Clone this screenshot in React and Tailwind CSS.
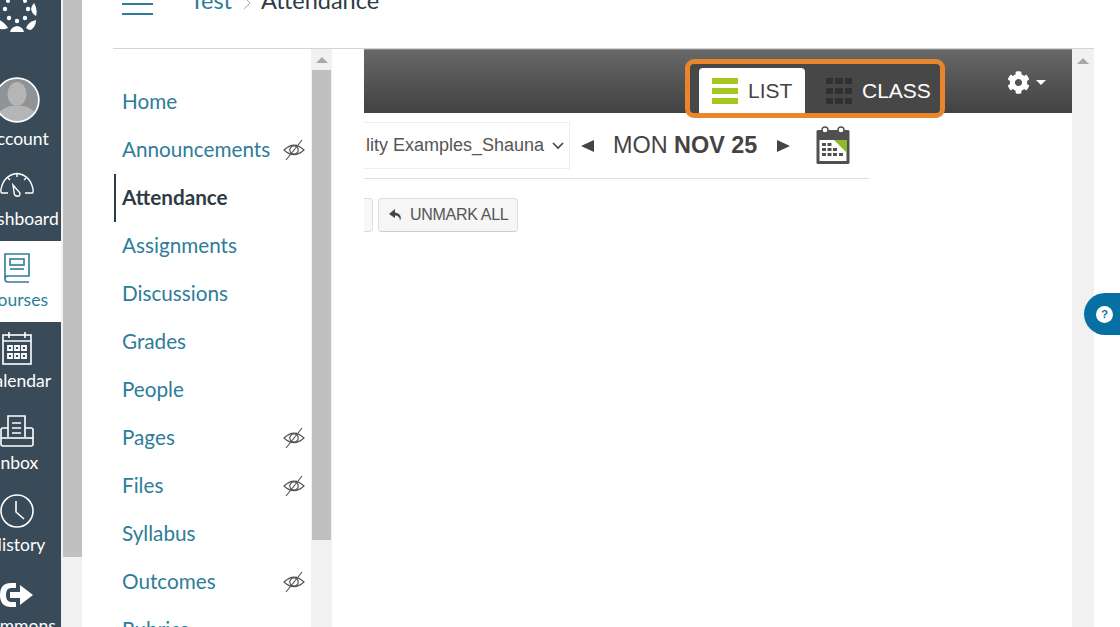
import { FaCog } from 'react-icons/fa';

const lato = "font-['Lato',sans-serif]";
const arial = "font-['Liberation_Sans',Arial,sans-serif]";

function CanvasLogo() {
  return (
    <svg viewBox="-3 0 40 34" className="w-[40px] h-[34px]" fill="#fff">
      <path d="M10 32 Q11 27 17 26 Q23 27 24 32Z" />
      <path d="M-3 19 Q4 21 8 28 Q1 31 -3 27Z" />
      <path d="M26 28 Q28 22 36 20 Q36 26 31 30 Q28 30 26 28Z" />
      <path d="M34 3 Q38 9 36 16 Q32 14 31 9 Q32 5 34 3Z" />
      <circle cx="17" cy="21" r="2.2" />
      <circle cx="25" cy="18" r="2.2" />
      <circle cx="9" cy="18" r="2.2" />
      <circle cx="5" cy="9" r="2.2" />
      <circle cx="28" cy="9" r="2.2" />
      <circle cx="25" cy="1" r="2" />
      <circle cx="8" cy="1" r="2" />
    </svg>
  );
}

// Icons for the global nav, drawn to match the Canvas set
function AccountIcon() {
  return (
    <svg viewBox="0 0 46 46" className="w-[46px] h-[46px] shrink-0">
      <defs>
        <clipPath id="avatar"><circle cx="23" cy="23" r="21" /></clipPath>
      </defs>
      <circle cx="23" cy="23" r="21" fill="#8f9396" />
      <g clipPath="url(#avatar)">
        <ellipse cx="23" cy="17" rx="9.5" ry="12" fill="#b5b5b5" />
        <path d="M0 46 Q2 33 16 29 L30 29 Q44 33 46 46Z" fill="#b5b5b5" />
      </g>
      <circle cx="23" cy="23" r="21.8" fill="none" stroke="#fff" strokeWidth="1.8" />
    </svg>
  );
}

function DashboardIcon() {
  return (
    <svg viewBox="0 0 34 27" className="w-[34px] h-[27px] shrink-0" fill="none" stroke="#fff" strokeWidth="1.4">
      <path d="M8 21 H2 Q0.5 21 1 17 Q4 3 17 1.5 Q30 3 33 17 Q33.5 21 32 21 H25" />
      <path d="M13 13 L20 21 Q20 25 17 24 Q14 24 14 20Z" />
      <path d="M17 2 v3 M8 6 l2 2 M26 6 l-2 2" />
    </svg>
  );
}

function CoursesIcon() {
  return (
    <svg viewBox="0 0 30 32" className="w-[30px] h-[32px] shrink-0" fill="none" stroke="#2d7d9a" strokeWidth="1.6">
      <path d="M3 26 V2 H27 V24 H6 Q3 24 3 27 Q3 30 6 30 H27" />
      <rect x="8" y="7" width="14" height="6" />
      <path d="M8 17 H22" />
    </svg>
  );
}

function CalendarIcon() {
  return (
    <svg viewBox="0 0 32 34" className="w-[32px] h-[34px] shrink-0" fill="none" stroke="#fff" strokeWidth="1.6">
      <rect x="2" y="4" width="28" height="29" />
      <path d="M2 10 H30 M8 1 v6 M24 1 v6" />
      <path strokeWidth="1.8" d="M7 15 h4 v4 h-4z M14 15 h4 v4 h-4z M21 15 h4 v4 h-4z M7 23 h4 v4 h-4z M14 23 h4 v4 h-4z M21 23 h4 v4 h-4z" />
    </svg>
  );
}

function InboxIcon() {
  return (
    <svg viewBox="0 0 34 32" className="w-[34px] h-[32px] shrink-0" fill="none" stroke="#fff" strokeWidth="1.6">
      <path d="M8 22 V1 H25 V22" />
      <path d="M12 8 H21 M12 13 H21 M12 18 H21" />
      <path d="M8 13 H3 Q1 13 1 15 V29 Q1 31 3 31 H31 Q33 31 33 29 V15 Q33 13 31 13 H25" />
      <path d="M1 23 H33" />
    </svg>
  );
}

function HistoryIcon() {
  return (
    <svg viewBox="0 0 36 36" className="w-[36px] h-[36px] shrink-0" fill="none" stroke="#fff" strokeWidth="1.6">
      <circle cx="18" cy="18" r="16" />
      <path d="M17 8 V19 L25 26" />
    </svg>
  );
}

function CommonsIcon() {
  return (
    <svg viewBox="0 0 36 26" className="w-[36px] h-[26px] shrink-0" fill="#fff">
      <path d="M17 1 H12 Q1 1 1 13 Q1 25 12 25 H17 V20 H12 Q7 20 7 13 Q7 6 12 6 H17Z" />
      <path d="M11 10 H21 V3 L34 13 L21 23 V16 H11Z" />
    </svg>
  );
}

function EyeOff() {
  return (
    <svg viewBox="0 0 22 22" className="w-[22px] h-[22px]" fill="none" stroke="#555" strokeWidth="1.2">
      <path d="M1 11 Q11 1 21 11 Q11 20 1 11Z" />
      <circle cx="11" cy="11" r="4.2" />
      <path d="M3 21 L19 1" />
    </svg>
  );
}

function CalendarPicker() {
  return (
    <svg viewBox="0 0 34 38" className="w-[34px] h-[38px]">
      <rect x="0.5" y="4" width="33" height="34" rx="1.5" fill="#505050" />
      <rect x="3.5" y="14" width="27" height="21" fill="#fff" />
      <circle cx="9" cy="4" r="3" fill="#fff" stroke="#505050" strokeWidth="1.4" />
      <circle cx="25" cy="4" r="3" fill="#fff" stroke="#505050" strokeWidth="1.4" />
      <g fill="#505050">
        <rect x="6" y="17" width="4" height="3" /><rect x="11.5" y="17" width="4" height="3" />
        <rect x="6" y="22" width="4" height="3" /><rect x="11.5" y="22" width="4" height="3" /><rect x="17" y="22" width="4" height="3" />
        <rect x="6" y="27" width="4" height="3" /><rect x="11.5" y="27" width="4" height="3" /><rect x="17" y="27" width="4" height="3" /><rect x="23" y="27" width="4" height="3" />
      </g>
      <path d="M18 14 H31 V27Z" fill="#8cb82b" />
    </svg>
  );
}

function ListIcon() {
  return (
    <span className="flex flex-col gap-[4px] w-[26px]">
      <span className="h-[6px] bg-[#a5c81e]" />
      <span className="h-[6px] bg-[#a5c81e]" />
      <span className="h-[6px] bg-[#a5c81e]" />
    </span>
  );
}

function ClassIcon() {
  return (
    <span className="grid grid-cols-3 gap-x-[2px] gap-y-[4px] w-[26px]">
      {[...Array(9)].map((_, i) => (
        <span key={i} className="h-[6px] bg-[#303030]" />
      ))}
    </span>
  );
}

const navItems = [
  { label: 'Account', icon: <AccountIcon />, h: 'h-[71px]' },
  { label: 'Dashboard', icon: <DashboardIcon />, h: 'h-[80px]', gap: 'gap-[10px]' },
  { label: 'Courses', icon: <CoursesIcon />, h: 'h-[81px]', active: true },
  { label: 'Calendar', icon: <CalendarIcon />, h: 'h-[81px]' },
  { label: 'Inbox', icon: <InboxIcon />, h: 'h-[82px]' },
  { label: 'History', icon: <HistoryIcon />, h: 'h-[82px]' },
  { label: 'Commons', icon: <CommonsIcon />, h: 'h-[81px]', gap: 'gap-[8px]' },
];

const menuItems = [
  { label: 'Home' },
  { label: 'Announcements', hidden: true },
  { label: 'Attendance', active: true },
  { label: 'Assignments' },
  { label: 'Discussions' },
  { label: 'Grades' },
  { label: 'People' },
  { label: 'Pages', hidden: true },
  { label: 'Files', hidden: true },
  { label: 'Syllabus' },
  { label: 'Outcomes', hidden: true },
  { label: 'Rubrics' },
];

function GlobalNav() {
  return (
    <div className="w-[61px] h-full bg-[#394b58] overflow-hidden shrink-0">
      <div className={`w-[88px] -ml-[27px] ${lato}`}>
        <div className="h-[90px] flex justify-center">
          <CanvasLogo />
        </div>
        {navItems.map(item => (
          <div
            key={item.label}
            className={`${item.h} flex flex-col items-center justify-end pb-[12px] ${item.gap || 'gap-[6px]'} ${item.active ? 'bg-white text-[#2d7d9a]' : 'text-white'}`}
          >
            {item.icon}
            <div className="text-[17.5px] leading-[20px]">{item.label}</div>
          </div>
        ))}
      </div>
    </div>
  );
}

function CourseMenu() {
  return (
    <div className={`w-[198px] pt-[29px] shrink-0 ${lato}`}>
      {menuItems.map(item => (
        <div key={item.label} className="h-[48px] flex items-center justify-between pl-[1px] pr-[6px]">
          <div className={`h-[48px] flex items-center pl-[6px] border-l-2 ${item.active ? 'border-[#2d3b45] font-bold text-[#2d3b45]' : 'border-transparent text-[#2d7d9a]'} text-[20.7px]`}>
            {item.label}
          </div>
          {item.hidden && <EyeOff />}
        </div>
      ))}
    </div>
  );
}

function ScrollUp() {
  return <div className="w-0 h-0 mx-auto border-x-[6px] border-x-transparent border-b-[6px] border-b-[#a8a8a8]" />;
}

function Toolbar() {
  return (
    <div className="h-[65px] bg-gradient-to-b from-[#686868] to-[#424242] border-t-2 border-[#8a8a8a] flex justify-end items-start pr-[26px]">
      <div className="mt-[9px] -mb-[10px] w-[260px] h-[59px] rounded-[9px] border-[5px] border-[#e8862e] bg-[#474747] flex items-end pl-[9px] relative z-10">
        <div className="w-[106px] h-[45px] rounded-t-[4px] bg-white flex items-center gap-[10px] pl-[13px] text-[#444]">
          <ListIcon />
          <span className={`${arial} text-[21px]`}>LIST</span>
        </div>
        <div className="h-[45px] flex items-center gap-[10px] pl-[21px] text-white">
          <ClassIcon />
          <span className={`${arial} text-[21px]`}>CLASS</span>
        </div>
      </div>
      <div className="ml-[62px] mt-[21px] flex items-center gap-[6px]">
        <FaCog size={23} color="#fff" />
        <span className="w-0 h-0 border-x-[5px] border-x-transparent border-t-[5px] border-t-white" />
      </div>
    </div>
  );
}

function DateBar() {
  return (
    <div className="w-[505px] h-[66px] border-b border-[#ddd] flex items-start">
      <div className="w-[206px] h-[47px] mt-[9px] border border-l-0 border-[#eee] bg-white flex items-center justify-end pr-[5px] gap-[8px] overflow-hidden shrink-0">
        <span className={`${arial} text-[18px] text-[#555] whitespace-nowrap`}>lity Examples_Shauna</span>
        <svg viewBox="0 0 12 8" className="w-[12px] h-[8px] shrink-0" fill="none" stroke="#444" strokeWidth="1.6"><path d="M1 1 L6 6 L11 1" /></svg>
      </div>
      <div className="h-[47px] mt-[9px] flex items-center text-[#444]">
        <span className="ml-[11px] w-0 h-0 border-y-[6px] border-y-transparent border-r-[13px] border-r-[#444]" />
        <span className={`${arial} ml-[19px] text-[23.4px] whitespace-nowrap`}>MON <b>NOV 25</b></span>
        <span className="ml-[20px] w-0 h-0 border-y-[6px] border-y-transparent border-l-[13px] border-l-[#444]" />
        <span className="ml-[26px] -mt-[2px]"><CalendarPicker /></span>
      </div>
    </div>
  );
}

function Actions() {
  return (
    <div className="flex gap-[5px] mt-[19px]">
      <div className="w-[9px] h-[34px] rounded-r-[4px] border border-l-0 border-[#ddd] bg-[#f7f7f7]" />
      <div className={`${arial} w-[140px] h-[34px] rounded-[4px] border border-[#ddd] border-b-[#ccc] bg-[#f6f6f6] flex items-center pl-[10px] gap-[7px] text-[16px] tracking-[-0.3px] text-[#555] whitespace-nowrap`}>
        <svg viewBox="0 0 14 14" className="w-[14px] h-[14px] shrink-0" fill="#444"><path d="M6 1 L0 6 L6 10 V7.5 Q11 7.5 11 13 Q14 6 6 4.5Z" /></svg>
        UNMARK ALL
      </div>
    </div>
  );
}

export default function App() {
  return (
    <div className="relative w-[1120px] h-[627px] overflow-hidden bg-white flex">
      <GlobalNav />
      {/* page scrollbar */}
      <div className="w-[21px] h-full bg-[#f1f1f1] shrink-0">
        <div className="h-[557px] bg-[#c0c0c0] ml-[2px]" />
      </div>

      <div className="flex-1 min-w-0 pl-[31px] pr-[26px]">
        <div className={`h-[49px] border-b border-[#d4d4d4] overflow-hidden ${lato}`}>
          <div className="flex items-start pl-[9px] -mt-[8px]">
            <div className="w-[31px] pt-[11px] flex flex-col gap-[8px]">
              <div className="h-[2px] bg-[#2d7d9a]" />
              <div className="h-[2px] bg-[#2d7d9a]" />
            </div>
            <div className="ml-[37px] -mt-[7px] text-[23.5px] leading-[30px] flex items-center text-[#2d3b45]">
              <span className="text-[#2d7d9a]">Test</span>
              <svg viewBox="0 0 8 14" className="w-[8px] h-[14px] ml-[11px] mr-[10px] mt-[5px]" fill="none" stroke="#aaa" strokeWidth="1"><path d="M1 1 L7 7 L1 13" /></svg>
              <span>Attendance</span>
            </div>
          </div>
        </div>

        <div className="flex h-[578px] overflow-hidden">
          <CourseMenu />
          <div className="w-[21px] h-full bg-[#f1f1f1] shrink-0 flex flex-col">
            <div className="h-[21px] pt-[8px]"><ScrollUp /></div>
            <div className="h-[470px] mx-[1px] bg-[#c0c0c0]" />
          </div>
          <div className="w-[32px] shrink-0" />
          <div className="w-[708px] shrink-0 -mt-[1px]">
            <Toolbar />
            <DateBar />
            <Actions />
          </div>
          <div className="w-[22px] h-full bg-[#f1f1f1] shrink-0 pt-[9px]"><ScrollUp /></div>
        </div>
      </div>

      {/* help tab */}
      <div className="absolute left-[1084px] top-[293px] w-[36px] h-[42px] rounded-l-full bg-[#0770a3] flex items-center pl-[12px]">
        <div className="w-[17px] h-[17px] rounded-full bg-white flex items-center justify-center text-[#0770a3] text-[11px] font-bold font-['Liberation_Sans',sans-serif] leading-none">?</div>
      </div>
    </div>
  );
}
